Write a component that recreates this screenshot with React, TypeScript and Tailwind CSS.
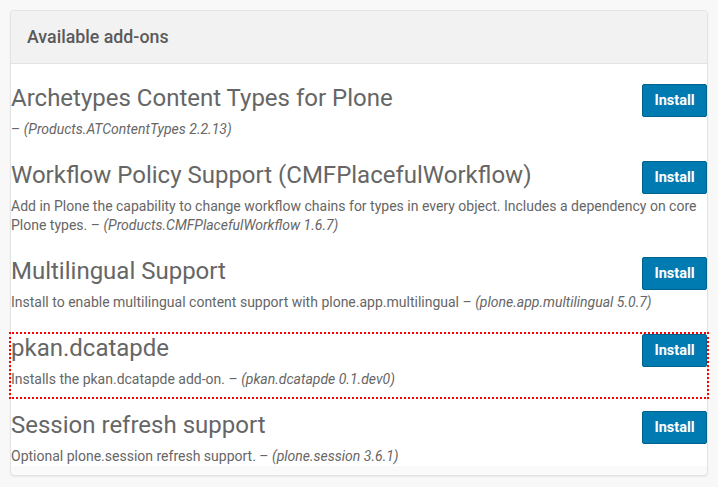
const addons = [
  {
    title: 'Archetypes Content Types for Plone',
    text: '',
    pkg: 'Products.ATContentTypes 2.2.13',
  },
  {
    title: 'Workflow Policy Support (CMFPlacefulWorkflow)',
    text: 'Add in Plone the capability to change workflow chains for types in every object. Includes a dependency on core Plone types.',
    pkg: 'Products.CMFPlacefulWorkflow 1.6.7',
  },
  {
    title: 'Multilingual Support',
    text: 'Install to enable multilingual content support with plone.app.multilingual',
    pkg: 'plone.app.multilingual 5.0.7',
  },
  {
    title: 'pkan.dcatapde',
    text: 'Installs the pkan.dcatapde add-on.',
    pkg: 'pkan.dcatapde 0.1.dev0',
    highlight: true,
  },
  {
    title: 'Session refresh support',
    text: 'Optional plone.session refresh support.',
    pkg: 'plone.session 3.6.1',
  },
]

export default function App() {
  return (
    <div
      className="min-h-[487px] w-[718px] bg-[#f8f8f8] pt-[10px] pl-[10px]"
      style={{ fontFamily: 'Roboto, "Liberation Sans", sans-serif' }}
    >
      <section className="w-[698px] rounded-[4px] border border-[#e3e3e3] bg-[#fafafa] pb-[9px] shadow-[0_1px_2px_rgba(0,0,0,0.06)]">
        <header className="h-[53px] rounded-t-[4px] border-b border-[#e3e3e3] bg-[#f2f2f2] pl-[16px] pt-[14px] text-[17.8px] font-medium leading-[24px] text-[#5a5a5a]">
          Available add-ons
        </header>
        <div className="h-[402px] bg-white pt-[20px]">
          {addons.map((a, i) => (
            <div
              key={a.title}
              className={`flow-root ${i === addons.length - 1 ? '' : 'mb-[14px]'} ${
                a.highlight ? 'outline-2 outline-dotted outline-[#ff0000]' : ''
              }`}
            >
              <button
                type="button"
                className="float-right h-[33px] w-[65px] rounded-[2px] border border-[#00628f] bg-[#007bb1] text-[14.5px] font-bold text-white"
              >
                Install
              </button>
              <h3 className="pt-[1px] text-[24px] leading-[26px] font-normal text-[#666]">{a.title}</h3>
              <p className="mt-[9px] mb-[8px] text-[14px] leading-[19px] text-[#666]">
                {a.text ? `${a.text} ` : ''}– <em>({a.pkg})</em>
              </p>
            </div>
          ))}
        </div>
      </section>
    </div>
  )
}
